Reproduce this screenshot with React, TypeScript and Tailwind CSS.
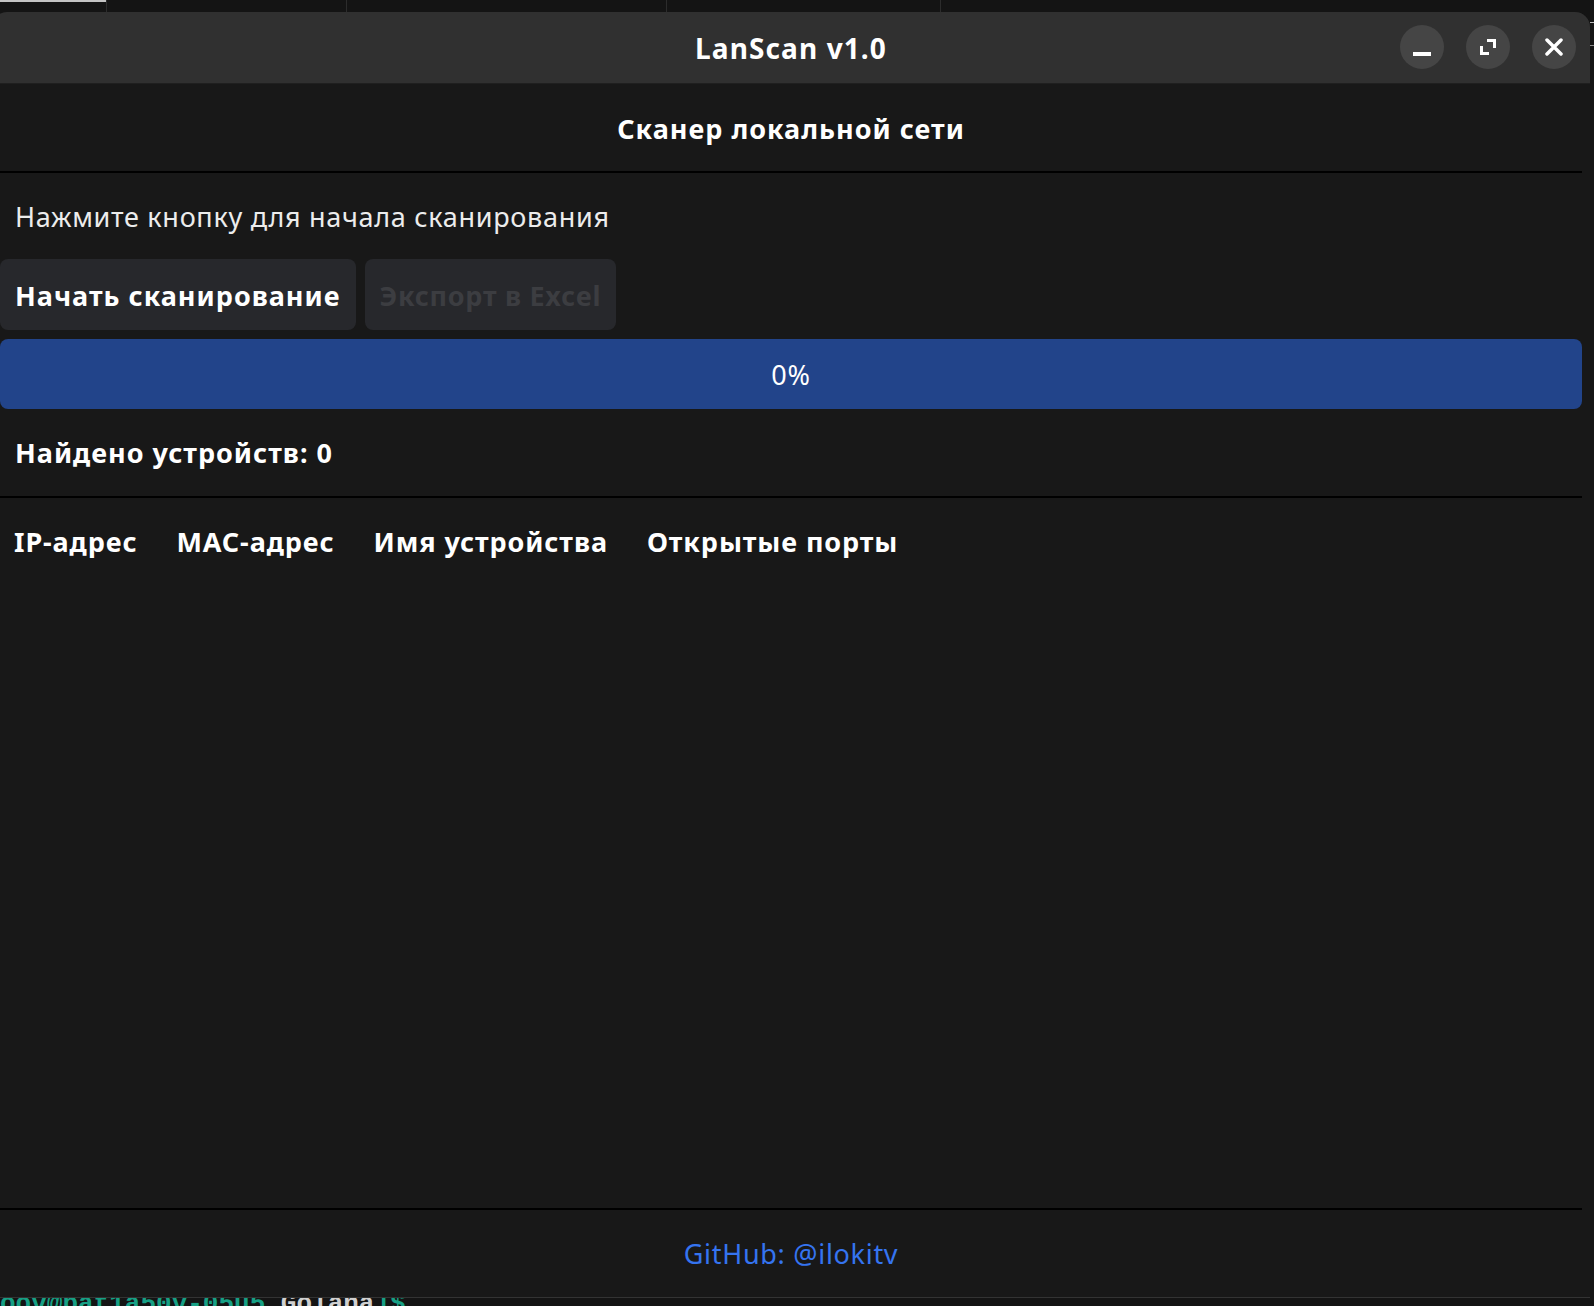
import React from 'react';

const columns = ['IP-адрес', 'MAC-адрес', 'Имя устройства', 'Открытые порты'];

const TitleButton: React.FC<{ children: React.ReactNode }> = ({ children }) => (
  <div className="w-[44px] h-[44px] rounded-full bg-[#454545] flex items-center justify-center">{children}</div>
);

export default function App() {
  const progress = 0;

  return (
    <div
      className="relative w-[1594px] h-[1306px] overflow-hidden bg-[#141414] text-[#f5f5f5]"
      style={{ fontFamily: '"Noto Sans", "Open Sans", sans-serif' }}
    >
      {/* desktop behind the window */}
      <div className="absolute left-0 top-0 w-[106px] h-[2px] bg-[#c4c4c4]" />
      <div className="absolute left-[106px] top-0 w-px h-[12px] bg-[#2c2c2c]" />
      <div className="absolute left-[346px] top-0 w-px h-[12px] bg-[#2c2c2c]" />
      <div className="absolute left-[666px] top-0 w-px h-[12px] bg-[#2c2c2c]" />
      <div className="absolute left-[940px] top-0 w-px h-[12px] bg-[#2c2c2c]" />
      <div className="absolute left-[1590px] top-[22px] w-[4px] h-px bg-[#bdbdbd]" />
      <div className="absolute left-[1590px] top-[45px] w-[4px] h-px bg-[#8a8a8a]" />
      <div
        className="absolute left-0 top-[1289px] text-[26px] leading-[30px] font-bold whitespace-pre"
        style={{ fontFamily: '"Liberation Mono", "DejaVu Sans Mono", monospace' }}
      >
        <span className="text-[#17a085]">oov@pat1a50v-05u5 </span>
        <span className="text-[#d0d0d0]">Golana</span>
        <span className="text-[#17a085]">]$</span>
      </div>

      {/* window */}
      <div className="absolute left-[-8px] top-[12px] w-[1598px] h-[1286px] flex flex-col rounded-t-[15px] overflow-hidden bg-[#181818] border-b border-[#333333]">
        <div className="relative h-[72px] shrink-0 bg-[#303030] border-b border-[#1f1f1f] flex items-center justify-center">
          <span className="text-[28px] font-bold text-white tracking-[1.1px]">LanScan v1.0</span>
          <div className="absolute right-[14px] top-[13px] flex gap-[22px]">
            <TitleButton>
              <div className="w-[18px] h-[4px] bg-white mt-[14px]" />
            </TitleButton>
            <TitleButton>
              <svg width="18" height="18" viewBox="0 0 18 18" fill="none">
                <path d="M8 2.5h7.5V10" stroke="white" strokeWidth="3" />
                <path d="M2.5 8v7.5H10" stroke="white" strokeWidth="3" />
              </svg>
            </TitleButton>
            <TitleButton>
              <svg width="18" height="18" viewBox="0 0 18 18" fill="none">
                <path d="M2 2l14 14M16 2L2 16" stroke="white" strokeWidth="3.5" strokeLinecap="round" />
              </svg>
            </TitleButton>
          </div>
        </div>

        <div className="flex-1 flex flex-col px-[8px]">
          <div className="h-[87px] shrink-0 flex items-center justify-center pt-[3px]">
            <h1 className="text-[27px] font-bold text-white tracking-[1px]">Сканер локальной сети</h1>
          </div>
          <div className="h-[2px] bg-black" />

          <div className="h-[86px] flex items-center pl-[15px] pt-[2px]">
            <p className="text-[27px] text-[#ececec] tracking-[0.7px]">Нажмите кнопку для начала сканирования</p>
          </div>

          <div className="flex gap-[9px]">
            <button className="h-[71px] px-[15px] pt-[3px] rounded-[8px] bg-[#27282c] text-[27px] font-bold text-white tracking-[1px]">
              Начать сканирование
            </button>
            <button disabled className="h-[71px] px-[15px] pt-[3px] rounded-[8px] bg-[#27282c] text-[27px] font-bold text-[#3c3d41] tracking-[0.7px]">
              Экспорт в Excel
            </button>
          </div>

          <div className="relative mt-[9px] h-[70px] rounded-[8px] bg-[#22448a] overflow-hidden flex items-center justify-center pt-[2px]">
            <div className="absolute left-0 top-0 h-full bg-[#3574f0]" style={{ width: `${progress}%` }} />
            <span className="relative text-[27px] text-white tracking-[0.7px]">{progress}%</span>
          </div>

          <div className="h-[87px] flex items-center pl-[15px] pt-[2px]">
            <span className="text-[27px] font-bold text-white tracking-[1px]">Найдено устройств: 0</span>
          </div>
          <div className="h-[2px] bg-black" />

          <div className="h-[88px] flex items-center gap-[39px] pl-[14px]">
            {columns.map((c) => (
              <span key={c} className="text-[27px] font-bold text-white tracking-[0.9px]">{c}</span>
            ))}
          </div>

          <div className="flex-1" />

          <div className="h-[2px] bg-black" />
          <div className="h-[87px] flex items-center justify-center pt-[2px]">
            <span className="text-[27px] text-[#3574f0] tracking-[0.7px]">GitHub: @ilokitv</span>
          </div>
        </div>
      </div>
    </div>
  );
}
